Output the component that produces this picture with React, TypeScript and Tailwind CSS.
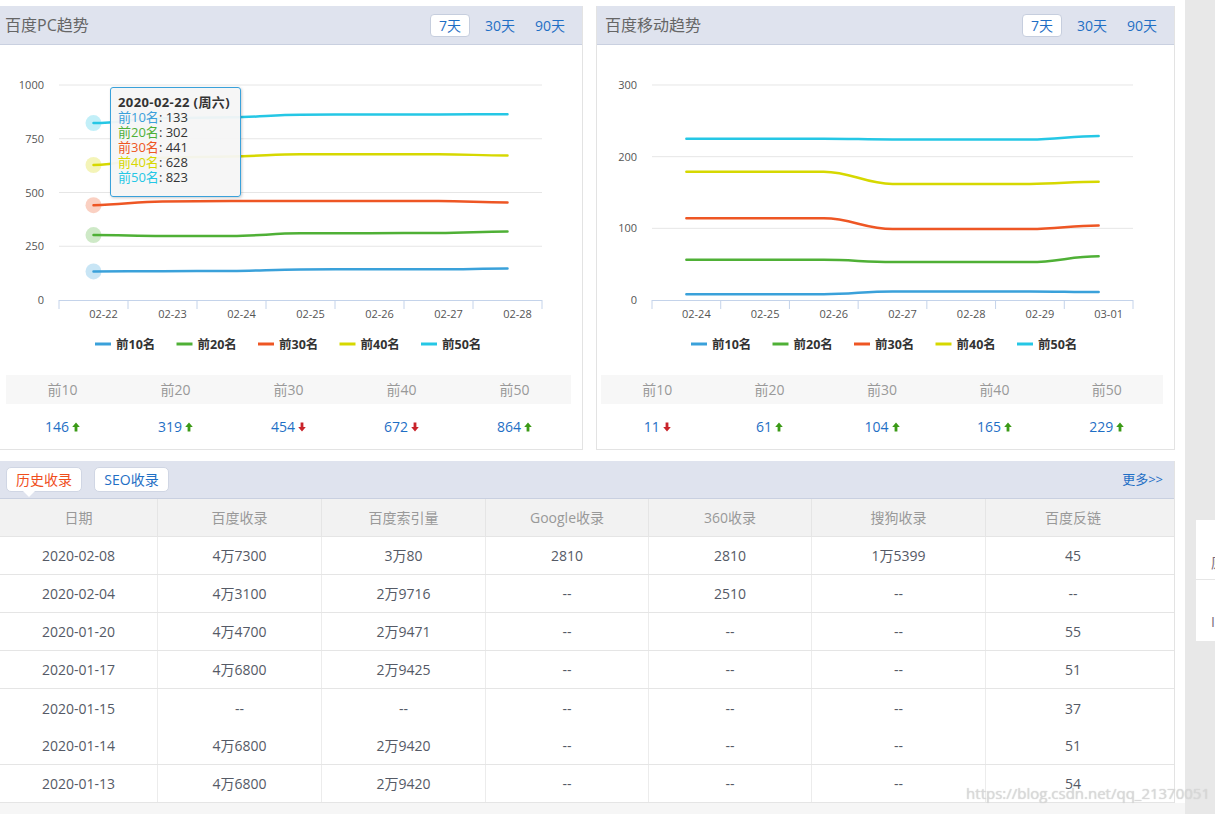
import React from 'react';

const COLORS = ['#3aa1da', '#4fb036', '#ee5624', '#d6d800', '#25c7e5'];
const NAMES = ['前10名', '前20名', '前30名', '前40名', '前50名'];

type ChartCfg = {
  vx: number;
  w: number;
  gridL: number;
  gridR: number;
  labelX: number;
  scale: number;
  ticks: number[];
  dates: string[];
  series: number[][];
  legendX: number;
  emphasis?: boolean;
};

function smoothPath(pts: [number, number][]) {
  let d = `M${pts[0][0]},${pts[0][1]}`;
  for (let i = 1; i < pts.length; i++) {
    const [x0, y0] = pts[i - 1];
    const [x1, y1] = pts[i];
    const dx = (x1 - x0) * 0.4;
    d += ` C${x0 + dx},${y0} ${x1 - dx},${y1} ${x1},${y1}`;
  }
  return d;
}

function Chart({ cfg }: { cfg: ChartCfg }) {
  const step = (cfg.gridR - cfg.gridL) / 7;
  const yOf = (v: number) => 300 - v * cfg.scale;
  return (
    <svg width={cfg.w} height={330} viewBox={`${cfg.vx} 45 ${cfg.w} 330`} className="block">
      {cfg.ticks.map((t) => (
        <g key={t}>
          {t > 0 && <line x1={cfg.gridL} x2={cfg.gridR} y1={yOf(t)} y2={yOf(t)} stroke="#e6e6e6" strokeWidth={1} />}
          <text x={cfg.labelX} y={yOf(t) + 4} textAnchor="end" fontSize={11} fill="#555">
            {t}
          </text>
        </g>
      ))}
      <line x1={cfg.gridL} x2={cfg.gridR} y1={300.5} y2={300.5} stroke="#c4d3ea" strokeWidth={1} />
      {Array.from({ length: 8 }).map((_, k) => (
        <line
          key={k}
          x1={cfg.gridL + k * step}
          x2={cfg.gridL + k * step}
          y1={300}
          y2={309}
          stroke="#c4d3ea"
          strokeWidth={1}
        />
      ))}
      {cfg.dates.map((d, k) => (
        <text key={d} x={cfg.gridL + step * (k + 0.5) + 10} y={318} textAnchor="middle" fontSize={11} fill="#555">
          {d}
        </text>
      ))}
      {cfg.series.map((s, i) => {
        const pts = s.map((v, k) => [cfg.gridL + step * (k + 0.5), yOf(v)] as [number, number]);
        return (
          <g key={i}>
            {cfg.emphasis && <circle cx={pts[0][0]} cy={pts[0][1]} r={8} fill={COLORS[i]} opacity={0.28} />}
            <path d={smoothPath(pts)} fill="none" stroke={COLORS[i]} strokeWidth={2.5} strokeLinecap="round" />
          </g>
        );
      })}
      {NAMES.map((n, i) => {
        const x = cfg.legendX + i * 81.5;
        return (
          <g key={n}>
            <line x1={x} x2={x + 16} y1={344} y2={344} stroke={COLORS[i]} strokeWidth={3} />
            <text x={x + 21} y={348.5} fontSize={12.5} fontWeight="bold" fill="#333">
              {n}
            </text>
          </g>
        );
      })}
    </svg>
  );
}

function Arrow({ up }: { up: boolean }) {
  return (
    <svg width="8" height="10" viewBox="0 0 8 10" className={up ? '' : 'rotate-180'}>
      <path d="M4 0.5 L7.8 5 L5.4 5 L5.4 9.5 L2.6 9.5 L2.6 5 L0.2 5 Z" fill={up ? '#3b9a16' : '#c9232a'} />
    </svg>
  );
}

function Stats({ values, className }: { values: [number, boolean][]; className: string }) {
  return (
    <div className={className}>
      <div className="grid h-[29px] grid-cols-5 items-center bg-[#f7f7f7] text-[14px] text-[#999]">
        {['前10', '前20', '前30', '前40', '前50'].map((l) => (
          <div key={l} className="text-center">
            {l}
          </div>
        ))}
      </div>
      <div className="grid h-[45px] grid-cols-5 items-center text-[14px] text-[#1f6fc5]">
        {values.map(([v, up], i) => (
          <div key={i} className="flex items-center justify-center gap-[3px]">
            <span>{v}</span>
            <Arrow up={up} />
          </div>
        ))}
      </div>
    </div>
  );
}

function PanelHeader({ title, pad }: { title: string; pad: string }) {
  return (
    <div className={`flex h-[39px] items-center border-b border-[#c9d0e0] bg-[#dfe3ee] pr-[12px] ${pad}`}>
      <span className="text-[16px] text-[#666]">{title}</span>
      <div className="ml-auto flex gap-[10px] text-[14px] text-[#1f6fc5]">
        <span className="flex h-[23px] w-[40px] items-center justify-center rounded-[4px] border border-[#c6cede] bg-white">
          7天
        </span>
        <span className="flex h-[23px] w-[40px] items-center justify-center">30天</span>
        <span className="flex h-[23px] w-[40px] items-center justify-center">90天</span>
      </div>
    </div>
  );
}

const pcCfg: ChartCfg = {
  vx: 0,
  w: 582,
  gridL: 59,
  gridR: 542,
  labelX: 44,
  scale: 0.215,
  ticks: [0, 250, 500, 750, 1000],
  dates: ['02-22', '02-23', '02-24', '02-25', '02-26', '02-27', '02-28'],
  series: [
    [133, 134, 135, 142, 143, 143, 146],
    [302, 298, 298, 310, 311, 312, 319],
    [441, 458, 460, 460, 460, 460, 454],
    [628, 662, 668, 678, 678, 678, 672],
    [823, 845, 850, 862, 863, 863, 864],
  ],
  legendX: 95,
  emphasis: true,
};

const mCfg: ChartCfg = {
  vx: 597,
  w: 577,
  gridL: 652,
  gridR: 1133,
  labelX: 637,
  scale: 0.7167,
  ticks: [0, 100, 200, 300],
  dates: ['02-24', '02-25', '02-26', '02-27', '02-28', '02-29', '03-01'],
  series: [
    [8, 8, 8, 12, 12, 12, 11],
    [56, 56, 56, 53, 53, 53, 61],
    [114, 114, 114, 99, 99, 99, 104],
    [179, 179, 179, 162, 162, 162, 165],
    [225, 225, 225, 224, 224, 224, 229],
  ],
  legendX: 691,
};

const TOOLTIP = [
  ['前10名', '133'],
  ['前20名', '302'],
  ['前30名', '441'],
  ['前40名', '628'],
  ['前50名', '823'],
];

const ROWS = [
  ['2020-02-08', '4万7300', '3万80', '2810', '2810', '1万5399', '45'],
  ['2020-02-04', '4万3100', '2万9716', '--', '2510', '--', '--'],
  ['2020-01-20', '4万4700', '2万9471', '--', '--', '--', '55'],
  ['2020-01-17', '4万6800', '2万9425', '--', '--', '--', '51'],
  ['2020-01-15', '--', '--', '--', '--', '--', '37'],
  ['2020-01-14', '4万6800', '2万9420', '--', '--', '--', '51'],
  ['2020-01-13', '4万6800', '2万9420', '--', '--', '--', '54'],
];

const COLS = 'grid grid-cols-[158px_164px_164px_163px_163px_174px_188px]';

export default function App() {
  return (
    <div className="relative flex h-[814px] w-[1215px] overflow-hidden bg-white font-[family-name:'Open_Sans','Noto_Sans_CJK_SC',sans-serif]">
      <div className="flex w-[1185px] shrink-0 flex-col pt-[6px]">
        <div className="flex h-[444px] gap-[13px]">
          <div className="relative w-[583px] border-r border-b border-[#e3e3e3] bg-white">
            <PanelHeader title="百度PC趋势" pad="pl-[5px]" />
            <Chart cfg={pcCfg} />
            <Stats
              className="ml-[6px] w-[565px]"
              values={[
                [146, true],
                [319, true],
                [454, false],
                [672, false],
                [864, true],
              ]}
            />
            <div className="absolute left-[110px] top-[81px] w-[131px] rounded-[3px] border border-[#3aa1da] bg-[#f6f6f6]/95 pb-[11px] pl-[7px] pt-[7px] text-[13px] leading-[15px] text-[#333] shadow-[1px_1px_3px_rgba(0,0,0,0.2)]">
              <div className="font-bold tracking-[0.4px]">2020-02-22 (周六)</div>
              {TOOLTIP.map(([n, v], i) => (
                <div key={n}>
                  <span style={{ color: COLORS[i] }}>{n}</span>: {v}
                </div>
              ))}
            </div>
          </div>
          <div className="w-[579px] border-x border-b border-[#e3e3e3] bg-white">
            <PanelHeader title="百度移动趋势" pad="pl-[8px]" />
            <Chart cfg={mCfg} />
            <Stats
              className="ml-[4px] w-[562px]"
              values={[
                [11, false],
                [61, true],
                [104, true],
                [165, true],
                [229, true],
              ]}
            />
          </div>
        </div>

        <div className="mt-[11px] w-[1175px] border-r border-[#e3e3e3]">
          <div className="relative flex h-[38px] items-center gap-[12px] border-b border-[#c9d0e0] bg-[#dfe3ee] pl-[6px] pr-[11px]">
            <span className="relative flex h-[25px] w-[76px] items-center justify-center rounded-[5px] border border-[#d0d6e4] bg-white text-[14px] text-[#f04e1c]">
              历史收录
              <span className="absolute left-[16px] top-[23px] h-0 w-0 border-x-[6px] border-t-[6px] border-x-transparent border-t-white" />
            </span>
            <span className="flex h-[25px] w-[75px] items-center justify-center rounded-[5px] border border-[#d0d6e4] bg-white text-[14px] text-[#1f6fc5]">
              SEO收录
            </span>
            <span className="ml-auto text-[13px] text-[#1f6fc5]">更多&gt;&gt;</span>
          </div>
          <div className={`${COLS} h-[38px] border-b border-[#e5e5e5] bg-[#f2f2f2] text-[14px] text-[#999]`}>
            {['日期', '百度收录', '百度索引量', 'Google收录', '360收录', '搜狗收录', '百度反链'].map((h, i) => (
              <div
                key={h}
                className={`flex items-center justify-center ${i < 6 ? 'border-r border-[#e5e5e5]' : 'pr-[14px]'}`}
              >
                {h}
              </div>
            ))}
          </div>
          {ROWS.map((r, ri) => (
            <div
              key={ri}
              className={`${COLS} h-[38px] text-[14px] text-[#555a66] ${ri === 4 ? '' : 'border-b border-[#e5e5e5]'}`}
            >
              {r.map((c, i) => (
                <div
                  key={i}
                  className={`flex items-center justify-center ${i < 6 ? 'border-r border-[#ececec]' : 'pr-[14px]'}`}
                >
                  {c}
                </div>
              ))}
            </div>
          ))}
        </div>
        <div className="flex-1 bg-[#f6f6f6]" />
      </div>

      <div className="min-w-0 flex-1 overflow-hidden bg-[#e8e8e8] pl-[11px] pt-[520px]">
        <div className="h-[121px] w-[40px] overflow-hidden whitespace-nowrap bg-white text-[14px] text-[#7a6a7a]">
          <div className="flex h-[60px] items-end border-b border-[#e6e6e6] pb-[6px] pl-[15px]">原</div>
          <div className="flex h-[60px] items-end pb-[8px] pl-[15px]">I</div>
        </div>
      </div>

      <div className="absolute bottom-[10px] right-[5px] text-[15px] text-[#dcdcdc]/80 [text-shadow:0_0_1px_#c4c4c4]">
        https://blog.csdn.net/qq_21370051
      </div>
    </div>
  );
}
